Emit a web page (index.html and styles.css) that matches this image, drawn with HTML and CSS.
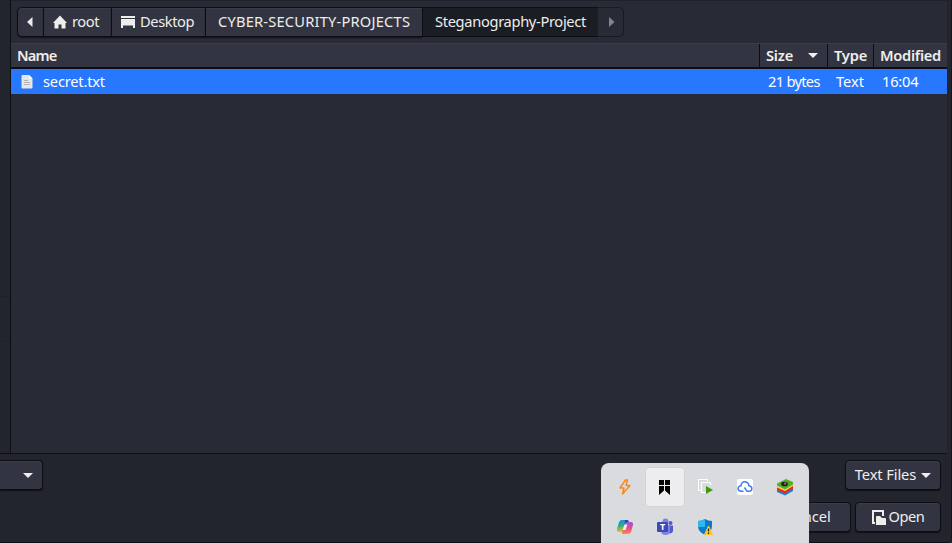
FILE: index.html
```
<!DOCTYPE html>
<html lang="en">
<head>
<meta charset="utf-8">
<title>Open File</title>
<link rel="stylesheet" href="styles.css">
</head>
<body>
<div class="dialog">
  <div class="body">
    <div class="sidebar"><div class="place"></div></div>
    <main class="browser">
      <nav class="pathbar">
        <button class="crumb back"><svg width="6" height="10" viewBox="0 0 6 10"><path d="M5.500 0v10L0 5z" fill="#eeeeec"/></svg></button>
        <button class="crumb home"><svg width="14" height="14" viewBox="0 0 14 14"><path d="M7 .5 14 8h-1.500v5.500H8.500V9.500h-3v4H1.500V8H0z" fill="#eeeeec"/></svg><span>root</span></button>
        <button class="crumb desk"><svg width="14" height="12" viewBox="0 0 14 12"><path d="M0 0h14v2H0zM0 3h14v9h-2V9.500H2V12H0z" fill="#eeeeec"/></svg><span>Desktop</span></button>
        <button class="crumb projects"><span>CYBER-SECURITY-PROJECTS</span></button>
        <button class="crumb current"><span>Steganography-Project</span></button>
        <button class="crumb next"><svg width="6" height="10" viewBox="0 0 6 10"><path d="M0 0v10l5.500-5z" fill="#85868a"/></svg></button>
      </nav>
      <div class="row head">
        <div class="cell name"><span>Name</span></div>
        <div class="cell size"><span>Size</span><svg width="10" height="5" viewBox="0 0 10 5"><path d="M0 0h10L5 5z" fill="#eeeeec"/></svg></div>
        <div class="cell type"><span>Type</span></div>
        <div class="cell modified"><span>Modified</span></div>
      </div>
      <div class="row file">
        <div class="cell name"><svg width="12" height="14" viewBox="0 0 12 14"><path d="M1.500 0H8l3.500 3.500v9q0 1-1 1h-9q-1 0-1-1V1q0-1 1-1z" fill="#e6e6e6"/><path d="M8 0v3.500h3.500z" fill="#fff"/><path d="M3 5.500h4M3 7.500h6M3 9.500h6" stroke="#b5b5b5"/></svg><span>secret.txt</span></div>
        <div class="cell size"><span>21 bytes</span></div>
        <div class="cell type"><span>Text</span></div>
        <div class="cell modified"><span>16:04</span></div>
      </div>
    </main>
  </div>
  <footer class="footer">
    <div class="line filters">
      <button class="btn encoding"><svg width="10" height="5" viewBox="0 0 10 5"><path d="M0 0h10L5 5z" fill="#eeeeec"/></svg></button>
      <button class="btn filter"><span>Text Files</span><svg width="10" height="5" viewBox="0 0 10 5"><path d="M0 0h10L5 5z" fill="#eeeeec"/></svg></button>
    </div>
    <div class="line actions">
      <button class="btn cancel"><span>Cancel</span></button>
      <button class="btn open"><svg width="14" height="15" viewBox="0 0 14 15"><path d="M3 13H1V1h10v5" fill="none" stroke="#eeeeec" stroke-width="2"/><path d="M4 7q0-1 1-1h3l2 2h3q1 0 1 1v6H4z" fill="#eeeeec"/></svg><span>Open</span></button>
    </div>
  </footer>
</div>
<div class="tray">
  <div class="slot"><svg width="20" height="20" viewBox="0 0 20 20"><path d="M10.500 3 5 11h4l-1.500 6L15 8.500h-4L12.500 3z" fill="none" stroke="#f58a1f" stroke-width="1.500" stroke-linejoin="round"/></svg></div>
  <div class="slot active"><svg width="20" height="20" viewBox="0 0 20 20"><path d="M4 3h5v5H4zM10 3h5v5h-5zM4 9h5v4.500L4 18zM10 9h5v9l-5-4.500z" fill="#000"/></svg></div>
  <div class="slot"><svg width="20" height="20" viewBox="0 0 20 20"><path d="M5.500 13.500h-2v-11h9v2" fill="none" stroke="#fff"/><path d="M15.500 8V5.500h-9v10H11" fill="none" stroke="#fff" stroke-width="1.200"/><path d="M11 9l7 4-7 4z" fill="#3f9b0b"/></svg></div>
  <div class="slot"><svg width="20" height="20" viewBox="0 0 20 20"><rect x="2" y="2" width="16" height="16" rx="2" fill="#fff"/><path d="M8.500 14.300H6.500C2 14.300 2 8.800 6 8.800c.5-5.300 7-5.300 8 0 4 .5 3.500 5.500 0 5.500h-2L9.500 10.500" fill="none" stroke="#3f7df0" stroke-width="1.500"/></svg></div>
  <div class="slot"><svg width="20" height="20" viewBox="0 0 20 20"><path d="M2 12.500l8 3 8-5V14l-8 4.500L2 15z" fill="#1683d8"/><path d="M2 10l8 3.500 8-5v3l-8 5-8-3.500z" fill="#e42b22"/><path d="M2 9l8 3.500 8-5v1.500l-8 5-8-3.500z" fill="#ffd321"/><path d="M2 6.500 11 2l7 3v2.500l-8 5-8-4z" fill="#55ae27"/><ellipse cx="9.500" cy="7" rx="3.400" ry="2.300" fill="#17251d"/><circle cx="10.200" cy="6.500" r="1.200" fill="#a24d9a"/></svg></div>
  <div class="slot"><svg width="20" height="20" viewBox="0 0 20 20"><defs><linearGradient id="cool" x2=".2" y2="1"><stop stop-color="#1a8ee8"/><stop offset=".5" stop-color="#28ae88"/><stop offset="1" stop-color="#f1bd26"/></linearGradient><linearGradient id="warm" x2="0" y2="1"><stop stop-color="#9656dd"/><stop offset=".5" stop-color="#e54c8c"/><stop offset="1" stop-color="#ff8a4c"/></linearGradient></defs><path d="M7 3h5q1.500 0 1 1.500L10.500 13q-.7 2-2.500 2H4q-2.500 0-2-3L4 5q.7-2 3-2z" fill="url(#cool)"/><path d="M13 17H8q-1.500 0-1-1.500L9.500 7q.7-2 2.500-2h4q2.500 0 2 3l-2 7q-.7 2-3 2z" fill="url(#warm)"/><path d="M10 3h2q1.500 0 2 2h-2q-2 0-2.500 2z" fill="#1b4bb4"/><path d="M9.500 7.500h3l-2 5.500h-3z" fill="#f6e8f0"/></svg></div>
  <div class="slot"><svg width="20" height="20" viewBox="0 0 20 20"><circle cx="15.500" cy="6" r="2" fill="#5058c8"/><circle cx="10.500" cy="4.500" r="3" fill="#7b83eb"/><path d="M13 8.500h5v5q0 3-4 3z" fill="#5059c9"/><path d="M6 8h9v6q0 4-4.500 4T6 14z" fill="#7b83eb"/><rect x="2" y="5" width="11" height="10" rx="1" fill="#4049b0"/><text x="5" y="13.300" class="teams">T</text></svg></div>
  <div class="slot"><svg width="20" height="20" viewBox="0 0 20 20"><path d="M10 2q3 2 7 2v5q0 6-7 9-7-3-7-9V4q4 0 7-2z" fill="#087bd0"/><path d="M10 2v8H3V4q4 0 7-2z" fill="#31b6ee"/><path d="M13.500 9 17.500 17.500h-8z" fill="#ffc52b" stroke="#ffc52b" stroke-linejoin="round"/><path d="M13.500 11.500v3m0 1v1.500" stroke="#222" stroke-width="1.200"/></svg></div>
</div>
</body>
</html>
```
FILE: styles.css
```
* { box-sizing: border-box; }
body {
  margin: 0;
  width: 952px;
  height: 543px;
  overflow: hidden;
  background: #23252e;
  color: #eeeeec;
  font: 14.67px/20px "Noto Sans", sans-serif;
}
svg { display: block; flex: none; }
.dialog {
  display: flex;
  flex-direction: column;
  height: 543px;
  border-right: 1px solid #15161c;
  border-bottom: 1px solid #0d0e13;
  border-bottom-right-radius: 5px;
}
.body {
  display: flex;
  height: 454px;
  margin-right: 4px;
  border-bottom: 1px solid #0d0e13;
}
.sidebar {
  width: 11px;
  padding-top: 296px;
  border-right: 1px solid #0d0e13;
}
.place { height: 46px; border: solid #1f2129; border-width: 1px 0; }
.browser {
  flex: 1;
  display: flex;
  flex-direction: column;
  background: #282a35;
  border-top: 1px solid #20222b;
}
.pathbar { display: flex; height: 30px; margin: 6px 0 6px 6px; }
button { font: inherit; color: inherit; padding: 0; margin: 0; white-space: nowrap; }
.crumb span, .cell span, .btn span { padding-bottom: 2px; }
.crumb {
  display: flex;
  align-items: center;
  background: #323541;
  border: 1px solid #0d0e13;
  border-right-width: 0;
  box-shadow: inset 0 1px #3a3d49, 0 1px 1px #14151b;
}
.back { width: 26px; padding-left: 9px; border-radius: 5px 0 0 5px; }
.home { width: 68px; padding-left: 9px; gap: 5px; letter-spacing: -0.4px; }
.desk { width: 94px; padding-left: 9px; gap: 5px; letter-spacing: -0.4px; }
.projects { width: 217px; padding-left: 12px; letter-spacing: 0.2px; }
.current {
  width: 176px;
  padding-left: 12px;
  background: #1b1d24;
  box-shadow: none;
  letter-spacing: -0.33px;
}
.next {
  width: 26px;
  padding-left: 11px;
  background: #282a35;
  border: 1px solid #191b22;
  border-left: 0;
  border-radius: 0 5px 5px 0;
  box-shadow: none;
}
.row { display: flex; }
.head {
  height: 26px;
  font-weight: 600;
  background: #323541;
  border-top: 1px solid #3b3e49;
  border-bottom: 2px solid #0d0e13;
}
.cell { display: flex; align-items: center; white-space: nowrap; }
.name { width: 748px; padding-left: 6px; }
.size { width: 68px; padding-left: 7px; }
.head .size {
  justify-content: space-between;
  padding-right: 9px;
  padding-left: 6px;
  letter-spacing: -0.2px;
}
.type { width: 46px; }
.modified { flex: 1; }
.head .name { letter-spacing: -0.8px; }
.head .type { letter-spacing: -0.2px; }
.head .modified { letter-spacing: -0.3px; }
.head .cell + .cell { border-left: 1px solid #0d0e13; }
.head .type, .head .modified { padding-left: 6px; }
.file { height: 25px; background: #2777ff; color: #fff; }
.file .name { padding-left: 10px; gap: 10px; letter-spacing: -0.2px; }
.file .size { padding-left: 9px; letter-spacing: -0.7px; }
.file .type { padding-left: 9px; }
.file .modified { padding-left: 9px; letter-spacing: -0.2px; }
.footer { padding: 6px 10px 0 0; }
.line { display: flex; height: 30px; }
.filters { justify-content: space-between; }
.actions { justify-content: flex-end; gap: 4px; margin-top: 12px; }
.btn {
  display: flex;
  align-items: center;
  justify-content: center;
  background: #323541;
  border: 1px solid #0d0e13;
  border-radius: 4px;
  box-shadow: inset 0 1px #3b3e49, 0 1px 1px #101117;
}
.encoding {
  width: 43px;
  border-left: 0;
  border-radius: 0 4px 4px 0;
  justify-content: flex-end;
  padding-right: 9px;
}
.filter { width: 96px; gap: 5px; letter-spacing: -0.1px; }
.cancel { width: 86px; }
.open { width: 86px; gap: 3px; letter-spacing: -0.5px; }
.tray {
  position: absolute;
  left: 601px;
  top: 463px;
  width: 208px;
  height: 80px;
  padding: 4px;
  display: grid;
  grid-template-columns: repeat(5, 40px);
  grid-auto-rows: 40px;
  background: #dadbdf;
  border-radius: 8px 8px 0 0;
  overflow: hidden;
}
.slot { display: flex; align-items: center; justify-content: center; }
.active {
  width: 40px;
  height: 40px;
  background: #ededef;
  border: 1px solid #d3d3d6;
  border-radius: 4px;
}
.teams { font: bold 9px "Open Sans", sans-serif; fill: #fff; }
```
